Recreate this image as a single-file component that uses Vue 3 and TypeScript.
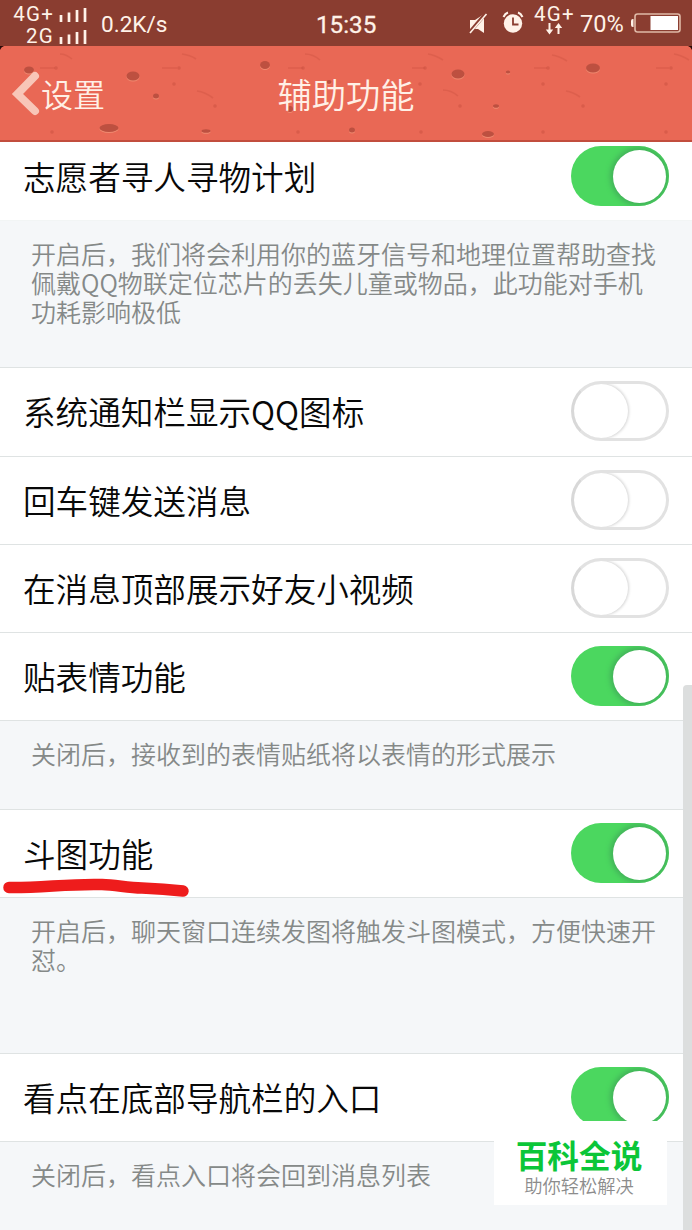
<script setup lang="ts">
interface Setting {
  label: string
  on: boolean
  note?: string[]
  noteHeight?: number
  marked?: boolean
}

const settings: Setting[] = [
  {
    label: '志愿者寻人寻物计划',
    on: true,
    note: [
      '开启后，我们将会利用你的蓝牙信号和地理位置帮助查找',
      '佩戴QQ物联定位芯片的丢失儿童或物品，此功能对手机',
      '功耗影响极低',
    ],
    noteHeight: 147,
  },
  { label: '系统通知栏显示QQ图标', on: false },
  { label: '回车键发送消息', on: false },
  { label: '在消息顶部展示好友小视频', on: false },
  { label: '贴表情功能', on: true, note: ['关闭后，接收到的表情贴纸将以表情的形式展示'], noteHeight: 88.5 },
  {
    label: '斗图功能',
    on: true,
    marked: true,
    note: ['开启后，聊天窗口连续发图将触发斗图模式，方便快速开', '怼。'],
    noteHeight: 155.6,
  },
  { label: '看点在底部导航栏的入口', on: true, note: ['关闭后，看点入口将会回到消息列表'], noteHeight: 89 },
]

// Pits in the brick header: centre x, centre y, radius x, radius y
const pits: number[][] = [
  [29, 24, 5, 3.5], [133, 30, 6.5, 4.5], [156, 50, 3, 2.5], [109, 82, 9.5, 4], [206, 85, 4.5, 1.8],
  [265, 19, 5, 4], [329, 36, 2.5, 2], [290, 63, 3, 3], [352, 84, 3, 2.5], [458, 28, 6.5, 4.5],
  [508, 26, 2.2, 1.6], [496, 60, 3, 1.8], [488, 88, 6, 3], [593, 22, 7, 4.5],
]
const specks: number[][] = [
  [56, 22], [174, 38], [179, 22], [52, 86], [298, 86], [303, 22], [420, 38], [425, 22], [543, 38],
  [548, 22], [543, 86], [666, 38], [671, 22], [666, 86], [583, 60], [460, 60], [215, 60], [421, 86],
]
const cracks: string[] = [
  'M60 8q6 0 12 5', 'M182 8q8 1 14 5', 'M305 8q8 0 15 6', 'M428 8q7 1 15 6', 'M552 9q7 1 15 6', 'M674 8q7 1 15 6',
  'M40 22h15', 'M162 22h15', 'M288 22h15', 'M412 22h13', 'M534 22h13', 'M656 22h13',
  'M74 45q9 0 16 6', 'M197 45q8 1 16 7', 'M443 44q8 0 15 6', 'M566 45q7 1 14 6',
]
</script>

<template>
  <div class="screen">
    <div class="status">
      <div class="carriers">
        <div v-for="name in ['4G+', '2G']" :key="name" class="carrier">
          <span>{{ name }}</span>
          <svg width="28" height="15" viewBox="0 0 28 15">
            <path d="M2 15V8M10 15V5.5M18 15V3M26 15V1" stroke="#fff2e8" stroke-width="2.7" />
          </svg>
        </div>
      </div>
      <span class="speed">0.2K/s</span>
      <span class="clock">15:35</span>
      <svg class="mute" width="20" height="22" viewBox="0 0 20 22">
        <path d="M1 7h5l9-6v19l-6-4H1z" fill="#fff2e8" />
        <path d="M0 20 17 0" stroke="#8a3d30" stroke-width="3.6" />
        <path d="M1 20 17.500 1" stroke="#fff2e8" stroke-width="1.6" />
      </svg>
      <svg class="alarm" width="22" height="23" viewBox="0 0 22 23">
        <circle cx="11" cy="12.500" r="9.2" fill="#fff2e8" />
        <path d="M1.500 6Q3 2.500 6 1.500M16 1.500q3 1 4.500 4.500" fill="none" stroke="#fff2e8" stroke-width="2" />
        <path d="M11 6.500v7h5.500" fill="none" stroke="#8a3d30" stroke-width="1.8" />
      </svg>
      <div class="network">
        <span>4G+</span>
        <svg width="18" height="12" viewBox="0 0 18 12">
          <path d="M4.500 0v8M13.500 11V3" stroke="#fff2e8" stroke-width="2" />
          <path d="M.8 6.500h7.400L4.500 11.500zM9.800 5h7.400L13.500 0z" fill="#fff2e8" />
        </svg>
      </div>
      <span class="percent">70%</span>
      <svg class="battery" width="51" height="20" viewBox="0 0 51 20">
        <rect x="5" y="1" width="45" height="18" rx="2.500" fill="none" stroke="#dfb9a7" stroke-width="1.6" />
        <path d="M3.500 6H2.800Q1 6 1 8v4q0 2 1.800 2h.7z" fill="#fff2e8" />
        <rect x="20.500" y="3" width="27.500" height="14" fill="#fff" />
      </svg>
    </div>

    <header class="header">
      <svg class="brick" width="692" height="96" viewBox="0 0 692 96">
        <g fill="none" stroke="#c9503f" stroke-width="1.6" opacity=".35">
          <path v-for="d in cracks" :key="d" :d="d" />
        </g>
        <circle v-for="(s, i) in specks" :key="i" :cx="s[0]" :cy="s[1]" r="1.8" fill="#c9503f" opacity=".5" />
        <g v-for="(p, i) in pits" :key="'p' + i">
          <ellipse :cx="p[0]" :cy="p[1] + 1" :rx="p[2]" :ry="p[3]" fill="#f08a70" />
          <ellipse :cx="p[0]" :cy="p[1]" :rx="p[2]" :ry="p[3]" fill="#bd5040" />
        </g>
        <path d="M0 0h4Q1 1 0 4zM692 0h-4q3 1 4 4z" fill="#2a0a08" />
      </svg>
      <div class="back">
        <svg width="30" height="46" viewBox="0 0 30 46">
          <path d="M24 6 6.500 24l17.500 17" fill="none" stroke="#f8c6b8" stroke-width="8" stroke-linecap="round" stroke-linejoin="miter" />
        </svg>
        <span>设置</span>
      </div>
      <h1>辅助功能</h1>
    </header>

    <main class="list">
      <template v-for="item in settings" :key="item.label">
        <div class="row">
          <span class="label">{{ item.label }}</span>
          <span class="switch" :class="{ on: item.on }"><i class="knob"></i></span>
          <svg v-if="item.marked" class="mark" width="192" height="24" viewBox="0 0 192 24">
            <path d="M9 13.500C42 14 68 9.500 102 10.500C116 11 127 13.500 142 14Q164 15 183 17" fill="none" stroke="#ee1c1c" stroke-width="11.500" stroke-linecap="round" stroke-linejoin="round" />
          </svg>
        </div>
        <div v-if="item.note" class="note" :style="{ height: item.noteHeight + 'px' }">
          <p v-for="line in item.note" :key="line">{{ line }}</p>
        </div>
      </template>
    </main>

    <div class="scrollbar"></div>
    <aside class="badge">
      <strong>百科全说</strong>
      <span>助你轻松解决</span>
    </aside>
  </div>
</template>

<style>
body {
  margin: 0;
}
</style>

<style scoped>
.screen {
  position: relative;
  width: 692px;
  height: 1230px;
  overflow: hidden;
  background: #f5f7f9;
  font-family: "Noto Sans CJK SC", sans-serif;
  font-weight: 350;
}
.status {
  display: flex;
  box-sizing: border-box;
  height: 46px;
  padding-left: 10px;
  background: #8a3d30;
  color: #fff2e8;
  font-family: Roboto, sans-serif;
  font-weight: 400;
  white-space: nowrap;
}
.carriers {
  width: 77px;
  padding-top: 4px;
}
.carrier {
  display: flex;
  justify-content: flex-end;
  gap: 5px;
  height: 22px;
  font-size: 20.500px;
  letter-spacing: 1.2px;
  line-height: 22px;
}
.carrier span {
  margin-top: -1px;
}
.carrier svg {
  margin-top: 3px;
}
.speed {
  width: 215px;
  margin-left: 14px;
  font-size: 22.600px;
  line-height: 49px;
}
.clock {
  width: 153px;
  font-size: 24.200px;
  line-height: 50px;
  -webkit-text-stroke: 0.3px #fff2e8;
}
.mute {
  margin-top: 13px;
}
.alarm {
  margin: 11px 0 0 13px;
}
.network {
  width: 42px;
  margin-left: 10px;
  padding-top: 4px;
  font-size: 20.500px;
  letter-spacing: 1.2px;
  line-height: 20px;
}
.network span,
.network svg {
  display: block;
}
.network svg {
  margin: -1px 0 0 11px;
}
.percent {
  width: 48px;
  margin-left: 4px;
  font-size: 23.600px;
  line-height: 49px;
}
.battery {
  margin: 13px 0 0 2px;
}
.header {
  position: relative;
  z-index: 1;
  display: grid;
  grid-template-columns: 1fr auto 1fr;
  align-items: center;
  box-sizing: border-box;
  height: 96px;
  border-bottom: 2px solid #c24d3e;
  background: #e96855;
  color: #fff0e6;
}
.brick {
  position: absolute;
  inset: 0;
}
.back {
  position: relative;
  display: flex;
  align-items: center;
  padding-left: 11px;
  font-size: 32px;
}
.back span {
  line-height: 46px;
}
h1 {
  position: relative;
  margin: 0;
  font-size: 34.300px;
  font-weight: 350;
  line-height: 50px;
}
.list {
  margin-top: -9px;
}
.row {
  position: relative;
  display: flex;
  align-items: center;
  justify-content: space-between;
  box-sizing: border-box;
  height: 88.300px;
  padding: 0 23px;
  border-bottom: 1px solid #dfe3e3;
  background: #fff;
}
.row:first-child {
  border-bottom-color: #f2f5f5;
}
.label {
  padding-bottom: 1px;
  color: #080808;
  font-size: 32.600px;
  line-height: 48px;
}
.switch {
  display: flex;
  align-items: center;
  box-sizing: border-box;
  width: 98px;
  height: 60px;
  margin-bottom: 1px;
  overflow: hidden;
  border: 3px solid #e2e2e2;
  border-left-color: #d8d8d8;
  border-radius: 30px;
  background: #fff;
}
.knob {
  width: 54px;
  height: 54px;
  flex: none;
  border-radius: 50%;
  background: #fff;
  box-shadow: 0 0 3px 1px #d4d4d4;
}
.switch.on {
  justify-content: flex-end;
  padding-right: 3px;
  border: 0;
  background: #4bd75f;
}
.on .knob {
  width: 53px;
  height: 53px;
  box-shadow: 0 0 5px 3px #43b35a;
}
.note {
  box-sizing: border-box;
  padding: 18px 0 0 31px;
  border-bottom: 1px solid #dfe3e3;
  color: #858988;
  font-size: 25px;
  line-height: 29px;
  white-space: nowrap;
}
.note p {
  margin: 0;
}
.mark {
  position: absolute;
  left: 0;
  top: 64px;
  z-index: 1;
}
.scrollbar {
  position: absolute;
  top: 685px;
  right: 0;
  width: 9px;
  height: 545px;
  border-radius: 4px 0 0 0;
  background: #dcdede;
}
.badge {
  position: absolute;
  top: 1121px;
  left: 494px;
  display: flex;
  flex-direction: column;
  align-items: center;
  box-sizing: border-box;
  width: 173px;
  height: 84px;
  padding: 13px 3px 0 0;
  background: #fff;
}
.badge strong {
  color: #0bc638;
  font-size: 31.700px;
  font-weight: 700;
  line-height: 40px;
}
.badge span {
  color: #8c8c8c;
  font-size: 18.300px;
  line-height: 22px;
}
</style>
